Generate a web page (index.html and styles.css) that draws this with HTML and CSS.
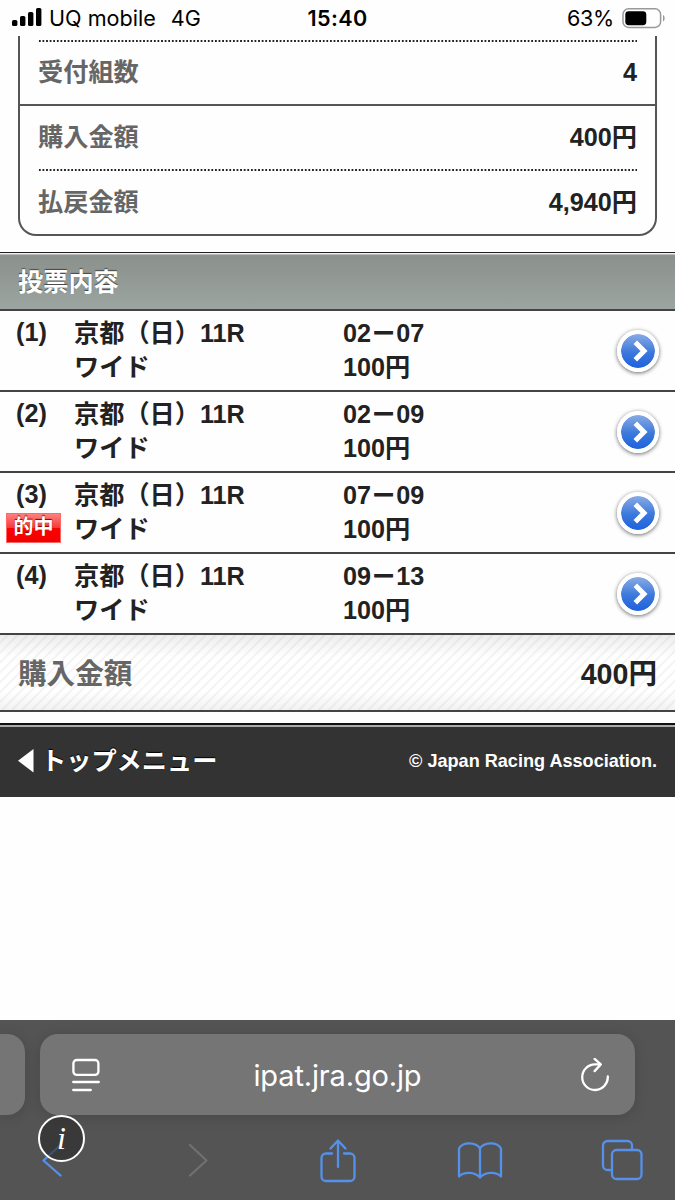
FILE: index.html
```html
<!DOCTYPE html>
<html lang="ja">
<head>
    <meta charset="UTF-8">
    <meta name="viewport" content="width=device-width, initial-scale=1.0">
    <title>投票内容</title>
    <link rel="stylesheet" href="styles.css">
</head>
<body>

<!-- ステータスバー -->
<header class="status-bar">
    <div class="status-left">
        <svg class="signal" width="30" height="20" viewBox="0 0 30 20">
            <rect x="0" y="13" width="5.4" height="6" rx="1.6"/>
            <rect x="8" y="9" width="5.4" height="10" rx="1.6"/>
            <rect x="16" y="5" width="5.4" height="14" rx="1.6"/>
            <rect x="24" y="1" width="5.4" height="18" rx="1.6"/>
        </svg>
        <span class="carrier">UQ mobile</span>
        <span class="network">4G</span>
    </div>
    <div class="status-time">15:40</div>
    <div class="status-right">
        <span class="percent">63%</span>
        <svg width="44" height="22" viewBox="0 0 44 22">
            <rect x="1" y="1.8" width="37.6" height="18.6" rx="5.5" fill="none" stroke="#999" stroke-width="1.5"/>
            <rect x="3.3" y="4.2" width="21" height="14" rx="3.4" fill="#000"/>
            <path d="M41 8v6.4c2.2-.9 2.2-5.5 0-6.4z" fill="#999"/>
        </svg>
    </div>
</header>

<main class="page">
    <!-- 集計 -->
    <dl class="summary">
        <div class="summary-row dotted"><dt>受付組数</dt><dd>4</dd></div>
        <div class="summary-row solid"><dt>購入金額</dt><dd>400円</dd></div>
        <div class="summary-row dotted"><dt>払戻金額</dt><dd>4,940円</dd></div>
    </dl>

    <h2 class="section-title">投票内容</h2>

    <!-- 投票一覧 -->
    <ul class="bet-list">
        <li class="bet">
            <div class="bet-no">(1)</div>
            <div class="bet-race">京都（日）11R<br>ワイド</div>
            <div class="bet-pick">02<span class="dash">－</span>07<br>100円</div>
            <a class="bet-link" href="#"><svg width="22" height="26" viewBox="0 0 22 26"><path d="M8.3 4.3L17 13l-8.700 8.700"/></svg></a>
        </li>
        <li class="bet">
            <div class="bet-no">(2)</div>
            <div class="bet-race">京都（日）11R<br>ワイド</div>
            <div class="bet-pick">02<span class="dash">－</span>09<br>100円</div>
            <a class="bet-link" href="#"><svg width="22" height="26" viewBox="0 0 22 26"><path d="M8.3 4.3L17 13l-8.700 8.700"/></svg></a>
        </li>
        <li class="bet">
            <div class="bet-no">(3)<span class="hit">的中</span></div>
            <div class="bet-race">京都（日）11R<br>ワイド</div>
            <div class="bet-pick">07<span class="dash">－</span>09<br>100円</div>
            <a class="bet-link" href="#"><svg width="22" height="26" viewBox="0 0 22 26"><path d="M8.3 4.3L17 13l-8.700 8.700"/></svg></a>
        </li>
        <li class="bet">
            <div class="bet-no">(4)</div>
            <div class="bet-race">京都（日）11R<br>ワイド</div>
            <div class="bet-pick">09<span class="dash">－</span>13<br>100円</div>
            <a class="bet-link" href="#"><svg width="22" height="26" viewBox="0 0 22 26"><path d="M8.3 4.3L17 13l-8.700 8.700"/></svg></a>
        </li>
    </ul>

    <div class="total"><span class="total-label">購入金額</span><span>400円</span></div>

    <footer class="site-footer">
        <a class="top-menu" href="#">
            <svg width="16" height="24" viewBox="0 0 16 24"><path d="M15.500 0v23.500L0 11.700z" fill="#fff"/></svg>
            <span class="top-menu-text">トップメニュー</span>
        </a>
        <small class="copyright">© Japan Racing Association.</small>
    </footer>
</main>

<!-- ブラウザのツールバー -->
<div class="browser-bar">
    <div class="address-row">
        <div class="prev-tab"></div>
        <div class="address">
            <svg width="28" height="34" viewBox="0 0 28 34" fill="none" stroke="#fff" stroke-width="2.3" stroke-linecap="round">
                <rect x="1.4" y="2" width="25" height="14.8" rx="3.3"/>
                <path d="M1.200 24h25.600M1.200 32h17.600"/>
            </svg>
            <span class="url">ipat.jra.go.jp</span>
            <svg width="28" height="34" viewBox="0 0 28 34" fill="none" stroke="#fff" stroke-width="2.3" stroke-linecap="round" stroke-linejoin="round">
                <path d="M26.800 18.500a12.800 12.800 0 1 1-12.800-12.100h5.800M13.600.9l6.200 5.500-6.200 6.700"/>
            </svg>
        </div>
    </div>
    <nav class="tools">
        <svg width="24" height="36" viewBox="0 0 24 36"><path d="M18.500 3L1.500 18.500l17 15"/></svg>
        <svg class="disabled" width="24" height="36" viewBox="0 0 24 36"><path d="M6 3l16.500 15.500L6 33.500"/></svg>
        <svg width="36" height="46" viewBox="0 0 36 46"><path d="M12 16.500H6a4.500 4.500 0 0 0-4.500 4.500v18.500A4.500 4.500 0 0 0 6 44h24a4.500 4.500 0 0 0 4.500-4.500V21a4.500 4.500 0 0 0-4.500-4.500H24M18 30V4M10.500 11.500L18 3.500l7.500 8"/></svg>
        <svg width="46" height="38" viewBox="0 0 46 38"><path d="M23 7.500C19 1 6 .5 2 7.500V35.500c5-5 16-5 21 1 5-6 16-6 21-1V7.500C40 .5 27 1 23 7.500zv28"/></svg>
        <svg width="42" height="42" viewBox="0 0 42 42"><rect x="11" y="11" width="29.5" height="29" rx="4.5"/><path d="M11 31H6.500A4.500 4.500 0 0 1 2 26.500v-20A4.500 4.500 0 0 1 6.500 2h20A4.500 4.500 0 0 1 31 6.500V11"/></svg>
    </nav>
    <div class="info-badge">i</div>
</div>

</body>
</html>
```
FILE: styles.css
```css
* {
    box-sizing: border-box;
}
body {
    margin: 0;
    width: 675px;
    height: 1200px;
    display: flex;
    flex-direction: column;
    overflow: hidden;
    background-color: #fefefe;
    color: #222;
    font-family: "Liberation Sans", "Noto Sans CJK JP", sans-serif;
    font-size: 25.2px;
    font-weight: bold;
}
a {
    color: inherit;
    text-decoration: none;
}
svg {
    display: block;
    flex: none;
}

/* ステータスバー */
.status-bar {
    display: grid;
    grid-template-columns: 1fr auto 1fr;
    align-items: center;
    height: 36px;
    padding: 0 9px 0 12px;
    color: #000;
    font-family: Inter, sans-serif;
    font-size: 21.6px;
    font-weight: normal;
}
.status-left,
.status-right {
    display: flex;
    align-items: center;
}
.status-right {
    justify-content: flex-end;
    gap: 8px;
}
.percent {
    letter-spacing: -0.3px;
}
.signal {
    margin-right: 7px;
    margin-top: -2px;
}
.network {
    margin-left: 15px;
}
.status-time {
    margin-left: -3px;
    font-weight: 600;
    letter-spacing: 0.4px;
}

/* 集計 */
.page {
    flex: 1;
}
.summary {
    margin: 0 18px 16px 18px;
    padding-top: 4px;
    height: 200px;
    border: 2px solid #555;
    border-top: none;
    border-radius: 0 0 18px 18px;
}
.summary-row {
    display: flex;
    justify-content: space-between;
    align-items: center;
    height: 65px;
    padding: 0 18px;
    line-height: 36px;
}
.summary-row:first-child {
    height: 64px;
}
.summary-row dt {
    color: #666;
}
.summary-row dd {
    margin: 0;
}
.dotted {
    background: radial-gradient(circle, #222 0.9px, transparent 1.2px) 0 0 / 3.6px 2px repeat-x content-box;
}
.solid {
    padding-bottom: 2px;
    border-top: 2px solid #555;
}

.section-title {
    margin: 0;
    height: 58px;
    padding-left: 18px;
    border-top: 1px solid #222;
    box-shadow: inset 0 1px 0 #eee, inset 0 2px 0 #b5bab7;
    background: linear-gradient(#8a908b, #9ca5a1);
    color: #fff;
    font-size: 25.2px;
    line-height: 59px;
    text-shadow: 0 -1px 1px #444;
}

/* 投票一覧 */
.bet-list {
    margin: -1px 0 0 0;
    padding: 0;
    list-style: none;
}
.bet {
    display: grid;
    grid-template-columns: 74px 269px 1fr 43px;
    height: 81px;
    padding: 5px 16px 0 0;
    border-top: 2px solid #444;
    line-height: 34px;
}
.bet-no {
    padding-left: 16px;
    line-height: 32px;
}
.hit {
    display: block;
    width: 55px;
    height: 30px;
    margin: 3px 0 0 -10px;
    border: 1px solid #f66;
    background: linear-gradient(#ff8080, #f83838 50%, #f00 51%, #f00000);
    color: #fff;
    font-size: 20px;
    line-height: 27px;
    text-align: center;
    text-shadow: 0 -1px 1px #800;
}
.dash {
    -webkit-text-stroke: 0.9px #222;
}
.bet-link {
    display: flex;
    align-items: center;
    justify-content: center;
    width: 42px;
    height: 42px;
    margin: 14px 0 0 1px;
    border: 4px solid #fff;
    border-radius: 50%;
    background: linear-gradient(#8aabe4, #3b78dc 55%, #1e62dc) padding-box;
    box-shadow: 0 1px 4px rgba(0, 0, 0, 0.6);
}
.bet-link path {
    fill: none;
    stroke: #fff;
    stroke-width: 5;
}

.total {
    display: flex;
    justify-content: space-between;
    align-items: center;
    height: 79px;
    padding: 0 18px 2px 18px;
    border-top: 2px solid #444;
    border-bottom: 2px solid #444;
    background:
        linear-gradient(rgba(0, 0, 0, 0.07), transparent 30%, transparent 75%, rgba(0, 0, 0, 0.05)),
        repeating-linear-gradient(135deg, #fff 0 4px, #f4f4f4 5px 6px, #fff 7px);
    font-size: 28.6px;
}
.total-label {
    color: #666;
}

.site-footer {
    display: flex;
    justify-content: space-between;
    align-items: center;
    height: 74px;
    margin-top: 11px;
    padding: 0 18px;
    border-top: 2px solid #111;
    box-shadow: inset 0 2px 0 #aaaca8;
    background-color: #333;
    color: #fff;
}
.top-menu {
    display: flex;
    align-items: center;
    gap: 7px;
    text-shadow: 0 -1px 1px #000;
}
.top-menu-text {
    padding-bottom: 4px;
}
.copyright {
    font-size: 18.1px;
}

/* ブラウザのツールバー */
.browser-bar {
    position: relative;
    height: 180px;
    padding-top: 14px;
    background-color: #545454;
}
.address-row {
    display: flex;
    gap: 15px;
}
.prev-tab {
    width: 25px;
    height: 81px;
    border-radius: 0 18px 18px 0;
    background-color: #757575;
    box-shadow: 0 2px 14px rgba(0, 0, 0, 0.15);
}
.address {
    display: flex;
    align-items: center;
    justify-content: space-between;
    width: 595px;
    height: 81px;
    padding: 0 26px 0 32px;
    border-radius: 18px;
    background-color: #757575;
    box-shadow: 0 2px 14px rgba(0, 0, 0, 0.15);
    color: #fff;
}
.url {
    padding: 2px 6px 0 0;
    font-family: Inter, sans-serif;
    font-size: 29px;
    font-weight: normal;
    letter-spacing: -0.15px;
}
.tools {
    display: grid;
    grid-template-columns: repeat(5, 142px);
    justify-items: center;
    align-items: center;
    height: 46px;
    margin: 22px 0 0 -17px;
}
.tools svg {
    fill: none;
    stroke: #5591ea;
    stroke-width: 2.3;
    stroke-linecap: round;
    stroke-linejoin: round;
}
.tools .disabled {
    stroke: #707070;
}
.info-badge {
    position: absolute;
    left: 38px;
    top: 95px;
    width: 47px;
    height: 47px;
    border: 2px solid #fff;
    border-radius: 50%;
    background-color: rgba(40, 40, 40, 0.6);
    color: #fff;
    font-family: "Liberation Serif", serif;
    font-size: 32px;
    font-style: italic;
    font-weight: normal;
    line-height: 43px;
    text-align: center;
}
```
